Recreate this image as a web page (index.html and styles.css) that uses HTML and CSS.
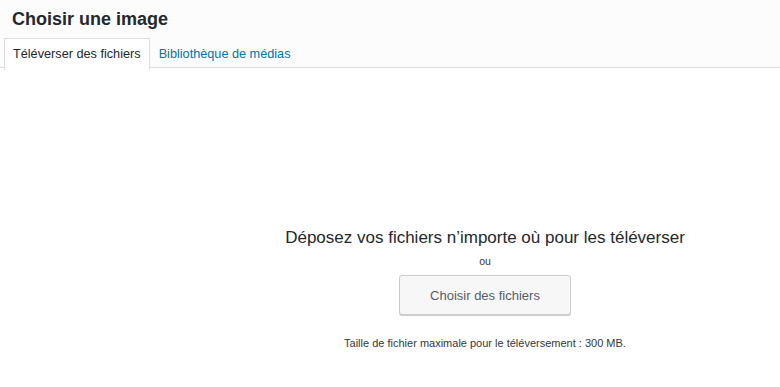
FILE: index.html
```html
<!DOCTYPE html>
<html lang="fr">
<head>
    <meta charset="UTF-8">
    <meta name="viewport" content="width=device-width, initial-scale=1.0">
    <title>Choisir une image</title>
    <link rel="stylesheet" href="styles.css">
</head>
<body>

<header class="frame-head">
    <h1 class="frame-title">Choisir une image</h1>
    <nav class="frame-tabs">
        <a class="tab tab-active" href="#">Téléverser des fichiers</a>
        <a class="tab" href="#">Bibliothèque de médias</a>
    </nav>
</header>

<div class="uploader">
    <div class="uploader-inner">
        <p class="drop-instructions">Déposez vos fichiers n’importe où pour les téléverser</p>
        <p class="drop-or">ou</p>
        <button class="btn-browse" type="button">Choisir des fichiers</button>
        <p class="max-size">Taille de fichier maximale pour le téléversement : 300 MB.</p>
    </div>
</div>

</body>
</html>
```

FILE: styles.css
```css
body {
    margin: 0;
    padding: 0;
    font-family: "Liberation Sans", Arial, sans-serif;
    color: #23282d;
    background-color: #fff;
}

.frame-head {
    background-color: #fcfcfc;
    border-bottom: 1px solid #dddddd;
    height: 68px;
    box-sizing: border-box;
    padding-left: 4px;
}

.frame-title {
    margin: 0;
    padding: 6px 0 0 8px;
    font-size: 18px;
    line-height: 26px;
    font-weight: bold;
    color: #23282d;
}

.frame-tabs {
    display: flex;
    margin-top: 6px;
}

.tab {
    display: block;
    padding: 0 8px;
    height: 30px;
    line-height: 30px;
    font-size: 12.7px;
    color: #0073aa;
    text-decoration: none;
    border: 1px solid transparent;
    border-bottom: none;
}

.tab-active {
    color: #23282d;
    background-color: #fff;
    border-color: #dddddd;
    height: 31px;
}

.uploader {
    padding-left: 190px;
    text-align: center;
}

.uploader-inner {
    padding-top: 159px;
}

.drop-instructions {
    margin: 0;
    font-size: 17px;
    line-height: 22px;
    color: #23282d;
}

.drop-or {
    margin: 0;
    padding-top: 5px;
    font-size: 10.5px;
    line-height: 14px;
    color: #32373c;
}

.btn-browse {
    margin-top: 7px;
    width: 172px;
    height: 40px;
    font-family: "Liberation Sans", Arial, sans-serif;
    font-size: 13px;
    color: #555d66;
    background-color: #f7f7f7;
    border: 1px solid #cccccc;
    border-radius: 3px;
    box-shadow: 0 1px 0 #cccccc;
    cursor: pointer;
}

.max-size {
    margin: 0;
    padding-top: 21px;
    font-size: 11px;
    line-height: 14px;
    color: #32373c;
}
```
